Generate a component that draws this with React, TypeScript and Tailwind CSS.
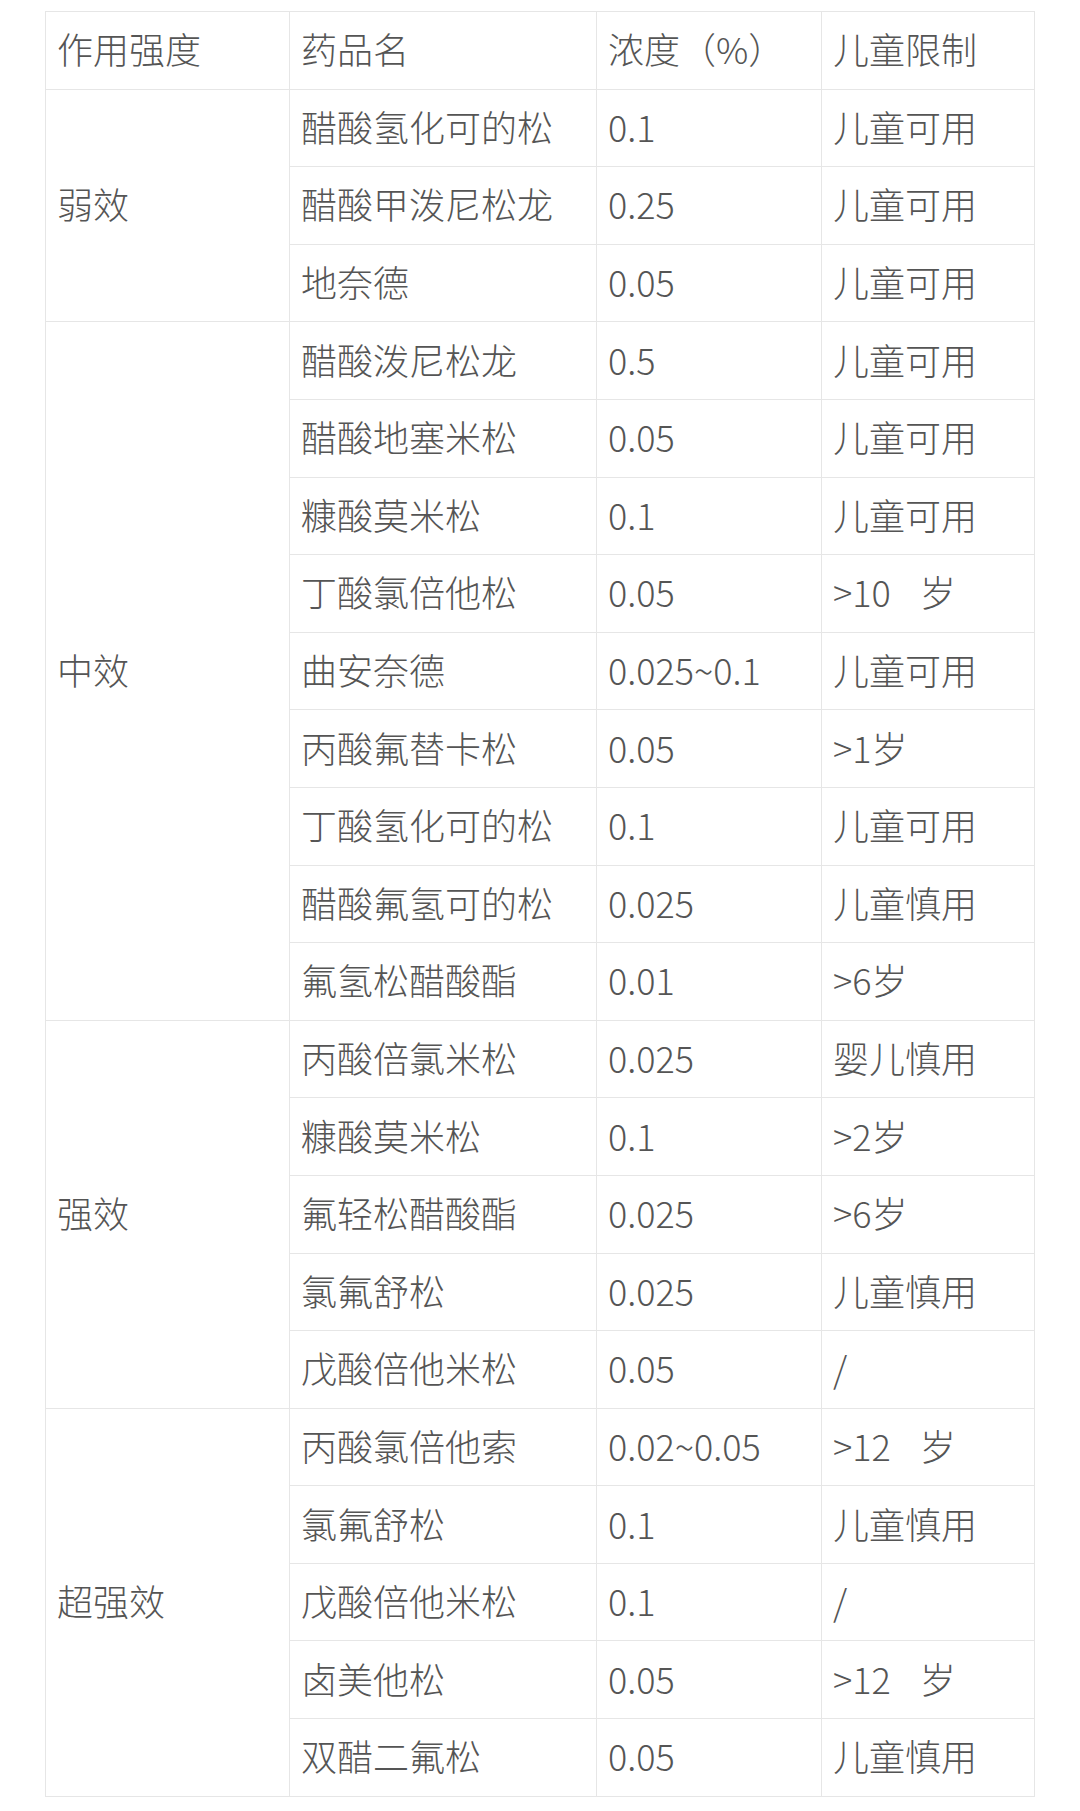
import type { ReactNode } from "react";

type Row = { name: string; conc: string; limit: ReactNode };
type Group = { level: string; rows: Row[] };

// age limit with the wide gap before 岁
const age = (n: string) => (
  <>
    {">" + n}
    <span className="ml-[29px]">岁</span>
  </>
);

const groups: Group[] = [
  {
    level: "弱效",
    rows: [
      { name: "醋酸氢化可的松", conc: "0.1", limit: "儿童可用" },
      { name: "醋酸甲泼尼松龙", conc: "0.25", limit: "儿童可用" },
      { name: "地奈德", conc: "0.05", limit: "儿童可用" },
    ],
  },
  {
    level: "中效",
    rows: [
      { name: "醋酸泼尼松龙", conc: "0.5", limit: "儿童可用" },
      { name: "醋酸地塞米松", conc: "0.05", limit: "儿童可用" },
      { name: "糠酸莫米松", conc: "0.1", limit: "儿童可用" },
      { name: "丁酸氯倍他松", conc: "0.05", limit: age("10") },
      { name: "曲安奈德", conc: "0.025~0.1", limit: "儿童可用" },
      { name: "丙酸氟替卡松", conc: "0.05", limit: ">1岁" },
      { name: "丁酸氢化可的松", conc: "0.1", limit: "儿童可用" },
      { name: "醋酸氟氢可的松", conc: "0.025", limit: "儿童慎用" },
      { name: "氟氢松醋酸酯", conc: "0.01", limit: ">6岁" },
    ],
  },
  {
    level: "强效",
    rows: [
      { name: "丙酸倍氯米松", conc: "0.025", limit: "婴儿慎用" },
      { name: "糠酸莫米松", conc: "0.1", limit: ">2岁" },
      { name: "氟轻松醋酸酯", conc: "0.025", limit: ">6岁" },
      { name: "氯氟舒松", conc: "0.025", limit: "儿童慎用" },
      { name: "戊酸倍他米松", conc: "0.05", limit: "/" },
    ],
  },
  {
    level: "超强效",
    rows: [
      { name: "丙酸氯倍他索", conc: "0.02~0.05", limit: age("12") },
      { name: "氯氟舒松", conc: "0.1", limit: "儿童慎用" },
      { name: "戊酸倍他米松", conc: "0.1", limit: "/" },
      { name: "卤美他松", conc: "0.05", limit: age("12") },
      { name: "双醋二氟松", conc: "0.05", limit: "儿童慎用" },
    ],
  },
];

const cell = "border border-[#e6e6e6] px-[11px] pb-[4px] text-left align-middle font-light";

export default function App() {
  return (
    <div
      className="min-h-[1811px] bg-white pl-[45px] pt-[11px] text-[36px] leading-none text-[#555555]"
      style={{ fontFamily: '"Noto Sans CJK SC", "Noto Sans", sans-serif' }}
    >
      <table className="w-[989px] table-fixed border-collapse">
        <colgroup>
          <col className="w-[244px]" />
          <col className="w-[307px]" />
          <col className="w-[225px]" />
          <col className="w-[213px]" />
        </colgroup>
        <thead>
          <tr className="h-[77.6px]">
            <th className={cell}>作用强度</th>
            <th className={cell}>药品名</th>
            <th className={cell}>浓度（%）</th>
            <th className={cell}>儿童限制</th>
          </tr>
        </thead>
        <tbody>
          {groups.map((g) =>
            g.rows.map((r, i) => (
              <tr key={g.level + i} className="h-[77.6px]">
                {i === 0 && (
                  <td rowSpan={g.rows.length} className={cell}>
                    {g.level}
                  </td>
                )}
                <td className={cell}>{r.name}</td>
                <td className={cell}>{r.conc}</td>
                <td className={`${cell} whitespace-nowrap`}>{r.limit}</td>
              </tr>
            ))
          )}
        </tbody>
      </table>
    </div>
  );
}
